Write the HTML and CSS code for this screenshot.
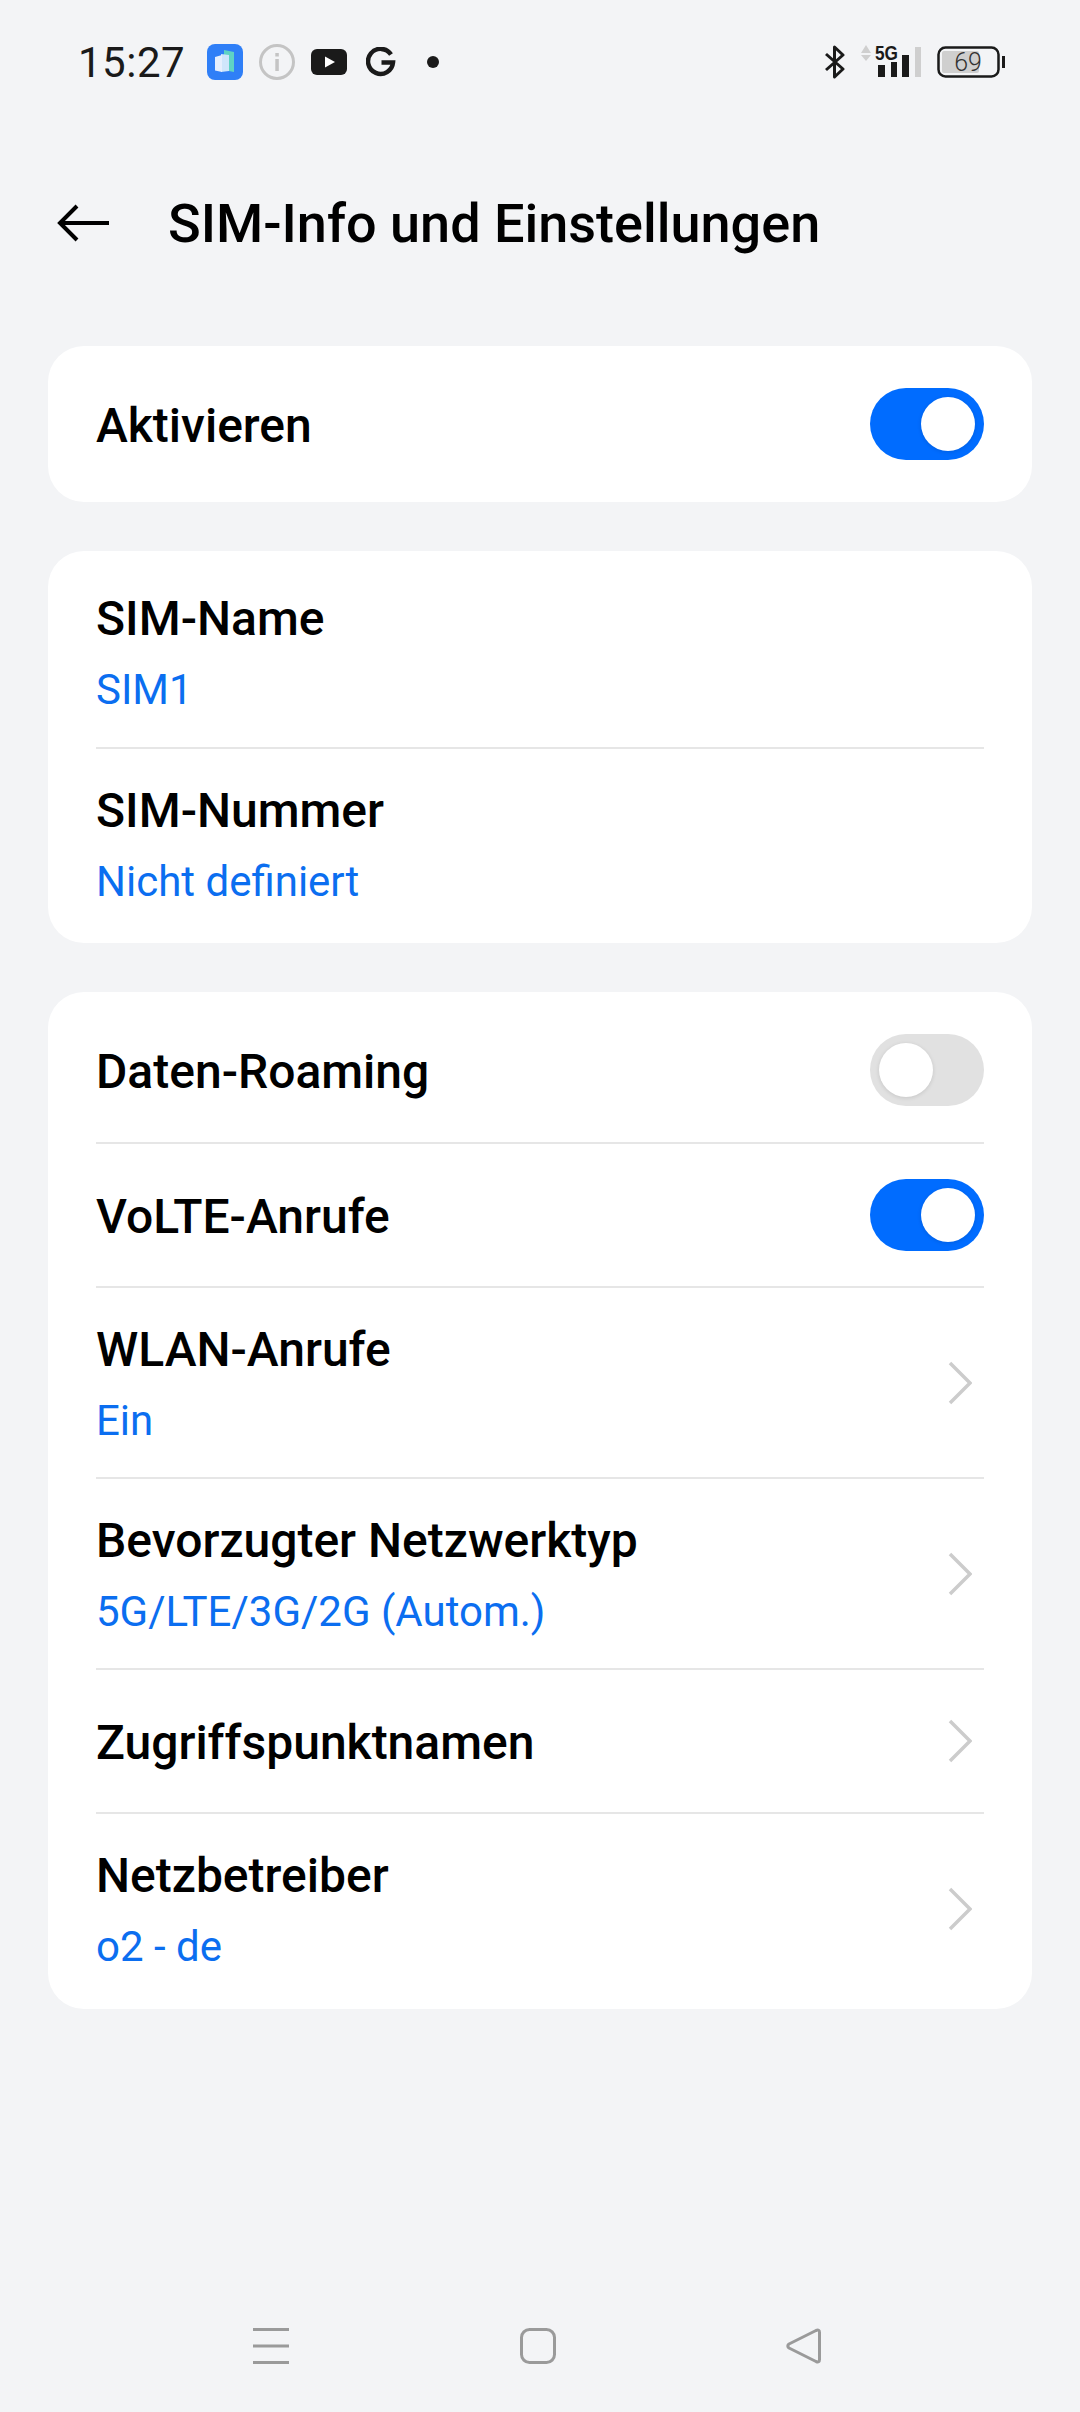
FILE: index.html
```html
<!DOCTYPE html>
<html lang="de">
<head>
  <meta charset="UTF-8">
  <meta name="viewport" content="width=device-width, initial-scale=1.0">
  <title>SIM-Info und Einstellungen</title>
  <link rel="stylesheet" href="styles.css">
</head>
<body>
  <div class="page">
    <div class="status-bar">
      <div class="status-left">
        <span class="time">15:27</span>
        <svg class="ic-app" width="36" height="36" viewBox="0 0 36 36">
          <rect width="36" height="36" rx="8" fill="#2f7ff7"/>
          <path d="M17 6l10 2v20l-10-2z" fill="#5fd3c4"/>
          <path d="M14 10l8 1v16l-8 1z" fill="#cfe6fb"/>
          <path d="M8 13l7-2v17l-7-1.500z" fill="#e6effd"/>
        </svg>
        <svg class="ic-info" width="36" height="36" viewBox="0 0 36 36">
          <circle cx="18" cy="18" r="16.500" fill="none" stroke="#c4c4c4" stroke-width="3"/>
          <rect x="16.300" y="15" width="3.500" height="12" fill="#c4c4c4"/>
          <rect x="16.300" y="9" width="3.500" height="3.500" fill="#c4c4c4"/>
        </svg>
        <svg class="ic-yt" width="36" height="26" viewBox="0 0 36 26">
          <rect width="36" height="26" rx="6" fill="#1a1a1a"/>
          <path d="M14 7.500l10 5.500-10 5.500z" fill="#fff"/>
        </svg>
        <svg class="ic-g" width="30" height="30" viewBox="0 0 30 30">
          <path d="M25 7.500A12.500 12.500 0 1 0 27 15.500H15.500" fill="none" stroke="#1a1a1a" stroke-width="4.500"/>
        </svg>
        <span class="dot"></span>
      </div>
      <div class="status-right">
        <svg class="ic-bt" width="22" height="34" viewBox="0 0 22 34">
          <path d="M2 9l17 15-8.500 8V2L19 10 2 25" fill="none" stroke="#1a1a1a" stroke-width="3" stroke-linejoin="round"/>
        </svg>
        <svg class="ic-signal" width="60" height="42" viewBox="0 -4 60 42">
          <path d="M0 8l5-8 5 8zM0 10l5 6 5-6z" fill="#cfcfcf"/>
          <text class="net-label" x="14" y="15" textLength="23" lengthAdjust="spacingAndGlyphs">5G</text>
          <rect x="17" y="20" width="7" height="12" fill="#1a1a1a"/>
          <rect x="30" y="17" width="6" height="15" fill="#1a1a1a"/>
          <rect x="41" y="10" width="7" height="22" fill="#1a1a1a"/>
          <rect x="54" y="2" width="6" height="30" fill="#cfcfcf"/>
        </svg>
        <svg class="ic-battery" width="68" height="32" viewBox="0 0 68 32">
          <rect x="1.500" y="1.500" width="60" height="29" rx="7" fill="none" stroke="#1a1a1a" stroke-width="2.500"/>
          <rect x="5" y="5" width="37" height="22" rx="2" fill="#cfcfcf"/>
          <rect x="65" y="10" width="3" height="12" fill="#1a1a1a"/>
          <text class="batt-label" x="31" y="25">69</text>
        </svg>
      </div>
    </div>

    <div class="title-bar">
      <svg class="back" width="54" height="40" viewBox="0 0 54 40">
        <path d="M52 20H3M20 3L3 20l17 17" fill="none" stroke="#000" stroke-width="4"/>
      </svg>
      <h1 class="title">SIM-Info und Einstellungen</h1>
    </div>

    <div class="card">
      <div class="row">
        <div class="row-text"><div class="label">Aktivieren</div></div>
        <span class="switch on"><span class="knob"></span></span>
      </div>
    </div>

    <div class="card sim">
      <div class="row tall">
        <div class="row-text">
          <div class="label">SIM-Name</div>
          <div class="value">SIM1</div>
        </div>
      </div>
      <div class="row tall">
        <div class="row-text">
          <div class="label">SIM-Nummer</div>
          <div class="value">Nicht definiert</div>
        </div>
      </div>
    </div>

    <div class="card">
      <div class="row">
        <div class="row-text"><div class="label">Daten-Roaming</div></div>
        <span class="switch"><span class="knob"></span></span>
      </div>
      <div class="row">
        <div class="row-text"><div class="label">VoLTE-Anrufe</div></div>
        <span class="switch on"><span class="knob"></span></span>
      </div>
      <div class="row tall">
        <div class="row-text">
          <div class="label">WLAN-Anrufe</div>
          <div class="value">Ein</div>
        </div>
        <svg class="chevron" width="24" height="44" viewBox="0 0 24 44"><path d="M2 2l20 20L2 42" fill="none" stroke="#cccccc" stroke-width="3.500"/></svg>
      </div>
      <div class="row tall">
        <div class="row-text">
          <div class="label">Bevorzugter Netzwerktyp</div>
          <div class="value">5G/LTE/3G/2G (Autom.)</div>
        </div>
        <svg class="chevron" width="24" height="44" viewBox="0 0 24 44"><path d="M2 2l20 20L2 42" fill="none" stroke="#cccccc" stroke-width="3.500"/></svg>
      </div>
      <div class="row">
        <div class="row-text"><div class="label">Zugriffspunktnamen</div></div>
        <svg class="chevron" width="24" height="44" viewBox="0 0 24 44"><path d="M2 2l20 20L2 42" fill="none" stroke="#cccccc" stroke-width="3.500"/></svg>
      </div>
      <div class="row tall">
        <div class="row-text">
          <div class="label">Netzbetreiber</div>
          <div class="value">o2 - de</div>
        </div>
        <svg class="chevron" width="24" height="44" viewBox="0 0 24 44"><path d="M2 2l20 20L2 42" fill="none" stroke="#cccccc" stroke-width="3.500"/></svg>
      </div>
    </div>

    <div class="nav-bar">
      <svg width="36" height="36" viewBox="0 0 36 36">
        <path d="M0 1.500h36M0 18h36M0 34.500h36" fill="none" stroke="#9a9a9a" stroke-width="3"/>
      </svg>
      <svg width="36" height="36" viewBox="0 0 36 36">
        <rect x="1.500" y="1.500" width="33" height="33" rx="8" fill="none" stroke="#9a9a9a" stroke-width="3"/>
      </svg>
      <svg width="36" height="36" viewBox="0 0 36 36">
        <path d="M30 2.500L3 16q-2.500 2 0 4L30 33.500q3.500 1.500 3.500-2V4.500q0-3.500-3.500-2z" fill="none" stroke="#9a9a9a" stroke-width="3" stroke-linejoin="round"/>
      </svg>
    </div>
  </div>
</body>
</html>
```

FILE: styles.css
```css
* {
  box-sizing: border-box;
}
body {
  margin: 0;
  background: #f3f4f6;
  font-family: Roboto, "Noto Sans", sans-serif;
}
.page {
  width: 1080px;
  height: 2412px;
  display: flex;
  flex-direction: column;
  padding: 0 48px;
}

/* status bar */
.status-bar {
  height: 124px;
  margin: 0 -48px;
  padding: 0 75px 0 78px;
  display: flex;
  justify-content: space-between;
  align-items: center;
}
.status-left, .status-right {
  display: flex;
  align-items: center;
}
.time {
  width: 129px;
  font-size: 42px;
  color: #1a1a1a;
  letter-spacing: 0.5px;
}
.ic-info, .ic-yt {
  margin-left: 16px;
}
.ic-g {
  margin-left: 19px;
}
.dot {
  width: 12px;
  height: 12px;
  margin-left: 31px;
  border-radius: 50%;
  background: #1a1a1a;
}
.ic-signal {
  margin-left: 15px;
}
.ic-battery {
  margin-left: 16px;
}
.net-label {
  font: 700 20px "Liberation Sans", sans-serif;
  fill: #1a1a1a;
}
.batt-label {
  font: 300 25px Roboto, sans-serif;
  fill: #333;
  text-anchor: middle;
}

/* title */
.title-bar {
  height: 98px;
  margin-top: 50px;
  margin-bottom: 74px;
  display: flex;
  align-items: center;
}
.back {
  margin-left: 9px;
}
.title {
  margin: 0 0 0 57px;
  font-size: 54px;
  font-weight: 500;
  color: #000;
}

/* cards */
.card {
  background: #fff;
  border-radius: 36px;
  padding: 6px 48px;
  margin-bottom: 49px;
}
.card.sim {
  padding: 5px 48px;
}
.row {
  min-height: 144px;
  display: flex;
  align-items: center;
  justify-content: space-between;
  border-top: 2px solid #e6e6e6;
}
.row:first-child {
  border-top: 0;
}
.row.tall {
  min-height: 191px;
}
.label {
  padding-top: 3px;
  font-size: 48px;
  line-height: 56px;
  font-weight: 500;
  color: #000;
}
.value {
  margin-top: 18px;
  font-size: 42px;
  line-height: 50px;
  color: #0b6ef0;
}

/* switch */
.switch {
  width: 114px;
  height: 72px;
  padding: 9px;
  border-radius: 36px;
  background: #e1e1e1;
  display: flex;
}
.switch.on {
  background: #006cff;
  justify-content: flex-end;
}
.knob {
  width: 54px;
  height: 54px;
  border-radius: 50%;
  background: #fff;
  box-shadow: 0 1px 4px rgba(0, 0, 0, 0.12);
}
.chevron {
  margin-right: 12px;
}

/* bottom nav */
.nav-bar {
  margin: auto -48px 0;
  height: 84px;
  padding: 0 258px 0 253px;
  display: flex;
  justify-content: space-between;
  align-items: flex-start;
}
```
